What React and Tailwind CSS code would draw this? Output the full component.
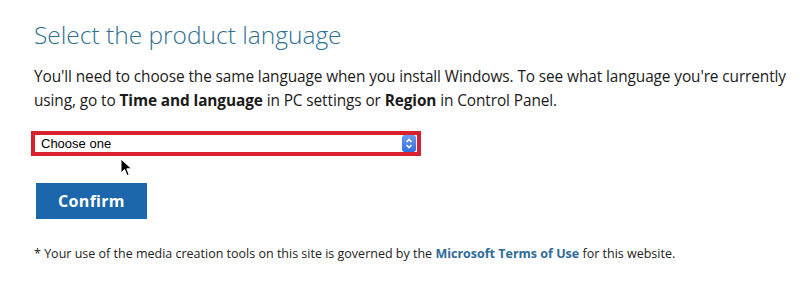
export default function App() {
  return (
    <div className="w-[812px] h-[288px] bg-white overflow-hidden font-['Open_Sans',sans-serif] text-[#1b1b1b]">
      <div className="pl-[34px] pt-[18px]">
        <h1 className="text-[24.5px] leading-[34px] font-light text-[#2f7092]">
          Select the product language
        </h1>
        <p className="mt-[13px] text-[15.4px] leading-[24px] tracking-[-0.1px]">
          You'll need to choose the same language when you install Windows. To see what language you're currently
          <br />
          using, go to <b>Time and language</b> in PC settings or <b>Region</b> in Control Panel.
        </p>

        <div className="relative mt-[18px] -ml-[3px] w-[390px] h-[25px] border-4 border-[#d8202f] bg-white flex items-center">
          <span className="pl-[6px] text-[13px] font-['Liberation_Sans',sans-serif] text-black">Choose one</span>
          <span className="ml-auto mr-[1px] w-[14px] h-[17px] rounded-[3px] bg-gradient-to-b from-[#6b9bf0] to-[#2f6ee0] flex items-center justify-center">
            <svg width="8" height="11" viewBox="0 0 8 11" fill="none" stroke="white" strokeWidth="1.6">
              <path d="M1.5 4 L4 1.5 L6.5 4" />
              <path d="M1.5 7 L4 9.5 L6.5 7" />
            </svg>
          </span>
          <svg className="absolute left-[85px] top-[23px]" width="13" height="19" viewBox="0 0 13 19">
            <path d="M1 1 L1 15 L4.5 11.5 L7 17.5 L9.2 16.6 L6.8 10.8 L11.5 10.8 Z" fill="black" stroke="white" strokeWidth="1" />
          </svg>
        </div>

        <button className="mt-[27px] ml-[2px] w-[111px] h-[36px] bg-[#1c67ab] text-white text-[16px] font-bold tracking-[0.3px]">
          Confirm
        </button>

        <p className="mt-[27px] text-[12.5px] leading-[16px] text-[#222]">
          * Your use of the media creation tools on this site is governed by the{" "}
          <span className="font-bold text-[#2d6b99]">Microsoft Terms of Use</span> for this website.
        </p>
      </div>
    </div>
  );
}
